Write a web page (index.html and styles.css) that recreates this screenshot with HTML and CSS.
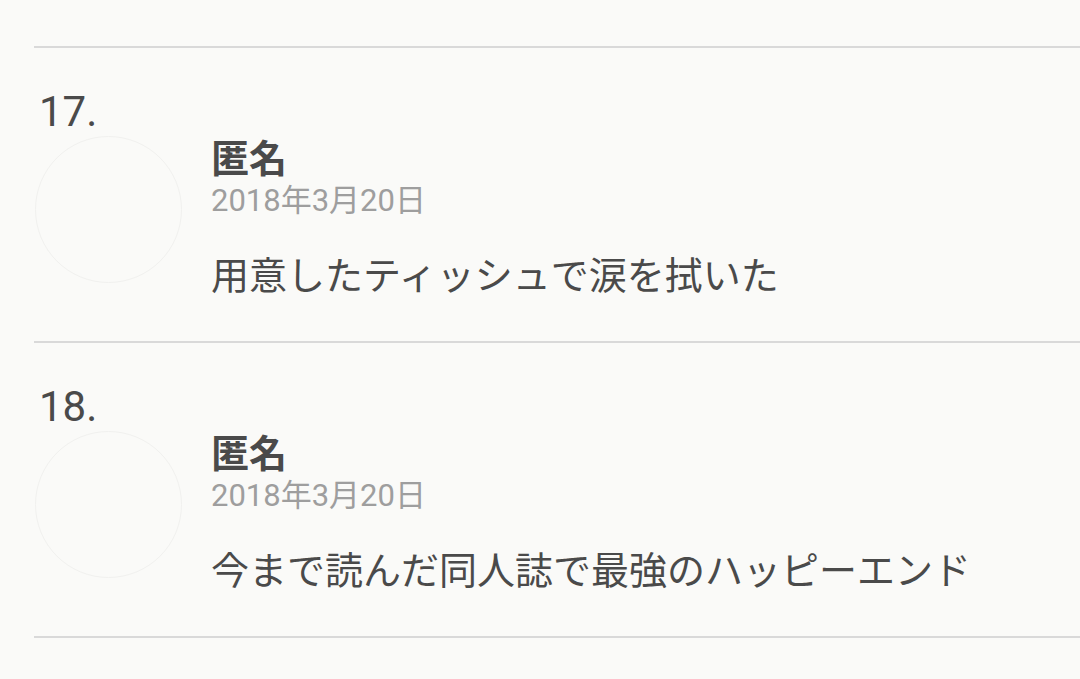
FILE: index.html
```html
<!DOCTYPE html>
<html lang="ja">
<head>
<meta charset="utf-8">
<link rel="stylesheet" href="styles.css">
</head>
<body>
<ol class="list">
  <li class="item">
    <div class="num">16.</div>
    <div class="row">
      <div class="avatar"></div>
      <div class="body">
        <div class="name">匿名</div>
        <div class="date">2018年3月20日</div>
        <p class="text">とにかく尊い作品でした</p>
      </div>
    </div>
  </li>
  <li class="item">
    <div class="num">17.</div>
    <div class="row">
      <div class="avatar"></div>
      <div class="body">
        <div class="name">匿名</div>
        <div class="date">2018年3月20日</div>
        <p class="text">用意したティッシュで涙を拭いた</p>
      </div>
    </div>
  </li>
  <li class="item">
    <div class="num">18.</div>
    <div class="row">
      <div class="avatar"></div>
      <div class="body">
        <div class="name">匿名</div>
        <div class="date">2018年3月20日</div>
        <p class="text">今まで読んだ同人誌で最強のハッピーエンド</p>
      </div>
    </div>
  </li>
  <li class="item">
    <div class="num">19.</div>
    <div class="row">
      <div class="avatar"></div>
      <div class="body">
        <div class="name">匿名</div>
        <div class="date">2018年3月20日</div>
        <p class="text">最高でした</p>
      </div>
    </div>
  </li>
</ol>
</body>
</html>
```

FILE: styles.css
```css
html, body {
  margin: 0;
  padding: 0;
  background: #fafaf8;
  overflow: hidden;
  height: 679px;
}
body {
  font-family: Roboto, "Noto Sans CJK JP", sans-serif;
  color: #4a4a4a;
}
.list {
  list-style: none;
  margin: -247px 0 0 34px;
  padding: 0;
}
.item {
  height: 295px;
  box-sizing: border-box;
  border-bottom: 2px solid #d9d9d9;
  padding-top: 40px;
}
.num {
  font-size: 42px;
  line-height: 48px;
  padding-left: 5px;
  color: #4a4a4a;
}
.row {
  display: flex;
  gap: 29px;
  margin-top: 0;
}
.avatar {
  width: 145px;
  height: 145px;
  flex: none;
  margin-left: 1px;
  border-radius: 50%;
  border: 1px solid #f1f1ef;
}
.body {
  display: flex;
  flex-direction: column;
}
.name {
  font-size: 38px;
  font-weight: bold;
  line-height: 46px;
  color: #4a4a4a;
}
.date {
  font-size: 31px;
  line-height: 38px;
  color: #9e9e9e;
}
.text {
  margin: 33px 0 0;
  font-size: 38px;
  line-height: 46px;
  color: #4a4a4a;
}
```
